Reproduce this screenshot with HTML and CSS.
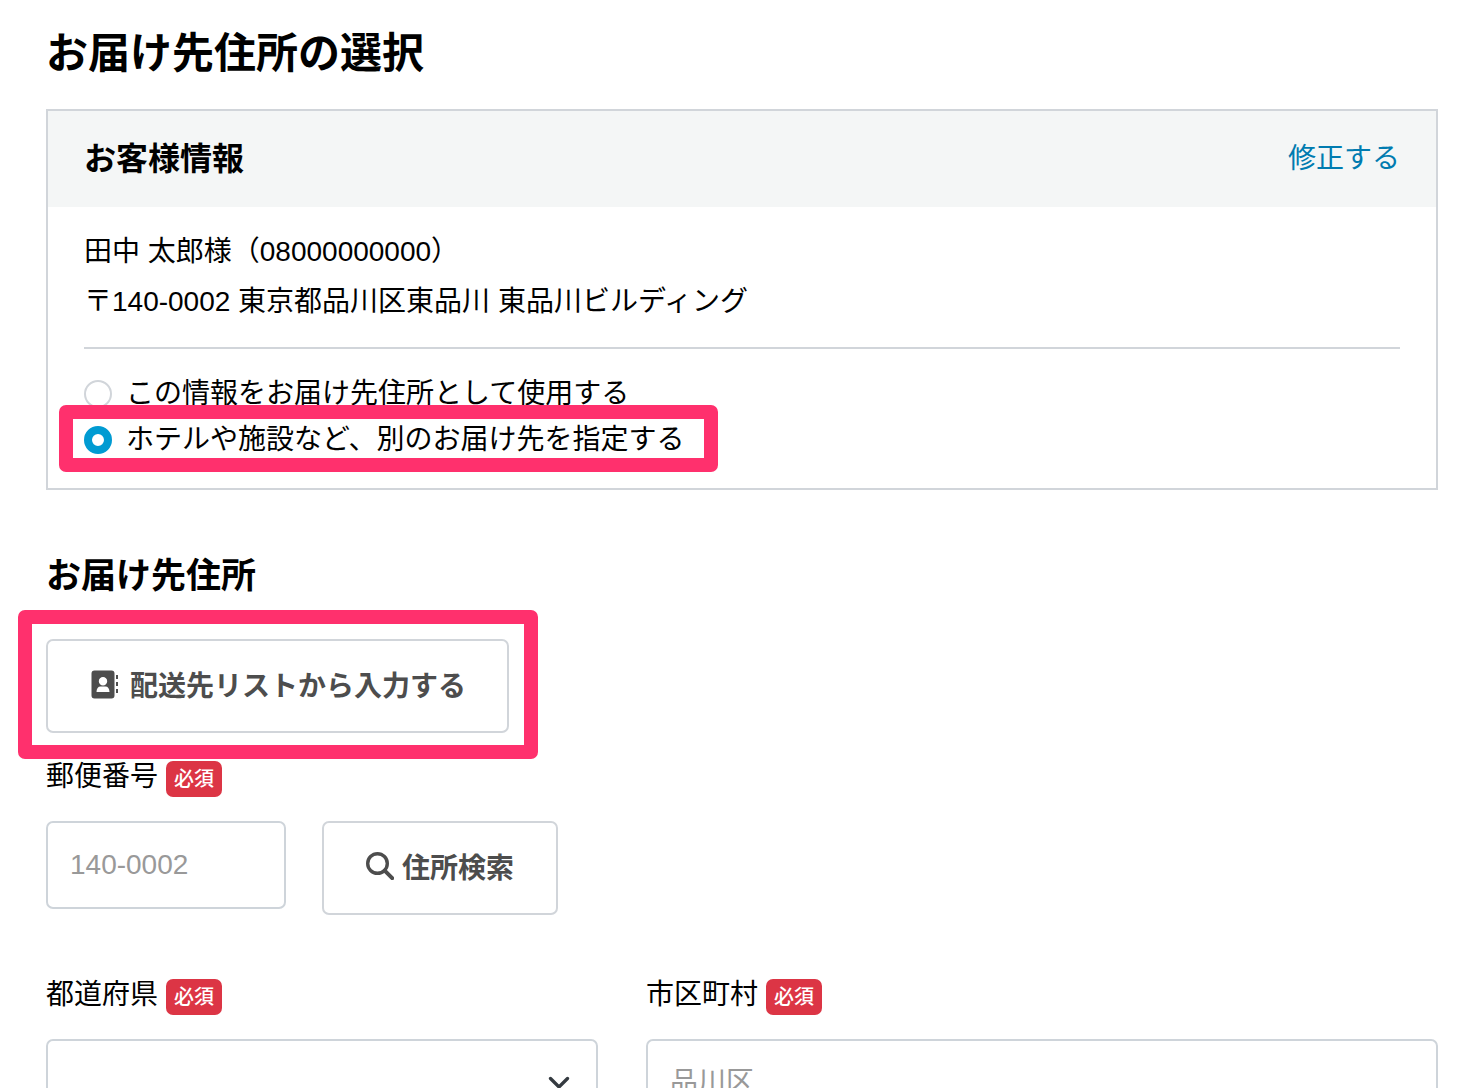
FILE: index.html
```html
<!DOCTYPE html>
<html lang="ja">
<head>
<meta charset="utf-8">
<meta name="viewport" content="width=device-width, initial-scale=1">
<title>お届け先住所の選択</title>
<link rel="stylesheet" href="styles.css">
</head>
<body>
<main class="page">
  <h1 class="page-title">お届け先住所の選択</h1>

  <section class="card">
    <header class="card-header">
      <h2 class="card-title">お客様情報</h2>
      <a class="card-link" href="#">修正する</a>
    </header>
    <div class="card-body">
      <p class="customer-line">田中 太郎様（08000000000）</p>
      <p class="customer-line">〒140-0002 東京都品川区東品川 東品川ビルディング</p>
      <hr class="divider">
      <div class="options">
        <label class="option"><input class="radio" type="radio" name="destination" value="self">この情報をお届け先住所として使用する</label>
        <label class="option highlight highlight-option"><input class="radio" type="radio" name="destination" value="other" checked>ホテルや施設など、別のお届け先を指定する</label>
      </div>
    </div>
  </section>

  <form class="address-form">
    <h2 class="section-title">お届け先住所</h2>
    <div class="highlight highlight-button">
      <button class="button" type="button">
        <svg class="icon-book" viewBox="0 0 32 32" aria-hidden="true">
          <path fill="currentColor" fill-rule="evenodd" d="M4.500 2.500h17a3 3 0 0 1 3 3v22a3 3 0 0 1-3 3H4.500a3 3 0 0 1-3-3V5.500a3 3 0 0 1 3-3zM13 9a4.200 4.200 0 1 0 0 8.400a4.200 4.200 0 1 0 0-8.400zM6.500 24h13c0-3.500-1.700-5.500-4-5.500h-5c-2.300 0-4 2-4 5.500z"/>
          <path fill="currentColor" d="M26 7h2v4h-2zM26 14h2v4h-2zM26 21h2v4h-2z"/>
        </svg>
        配送先リストから入力する
      </button>
    </div>

    <div class="label-row"><label for="postal">郵便番号</label><span class="badge">必須</span></div>
    <div class="postal-row">
      <input class="control postal-input" id="postal" type="text" placeholder="140-0002">
      <button class="button" type="button">
        <svg class="icon-search" viewBox="0 0 28 28" aria-hidden="true">
          <circle cx="11.500" cy="11.500" r="9.800" fill="none" stroke="currentColor" stroke-width="3.400"/>
          <path d="M18.700 18.700l7.500 7.500" fill="none" stroke="currentColor" stroke-width="4" stroke-linecap="round"/>
        </svg>
        住所検索
      </button>
    </div>

    <div class="region-row">
      <div>
        <div class="label-row"><label for="prefecture">都道府県</label><span class="badge">必須</span></div>
        <div class="select-wrap">
          <select class="control" id="prefecture"><option value=""></option></select>
          <svg class="chevron" viewBox="0 0 24 24" aria-hidden="true"><path d="M3.500 7.500l8.500 8.500l8.500-8.500" fill="none" stroke="#343a40" stroke-width="3.300" stroke-linecap="round" stroke-linejoin="round"/></svg>
        </div>
      </div>
      <div>
        <div class="label-row"><label for="city">市区町村</label><span class="badge">必須</span></div>
        <input class="control" id="city" type="text" placeholder="品川区">
      </div>
    </div>
  </form>
</main>
</body>
</html>
```
FILE: styles.css
```css
* {
  box-sizing: border-box;
}

body,
h1,
h2,
p {
  margin: 0;
}

body,
input,
select,
button {
  font-family: "Liberation Sans", "Noto Sans CJK JP", sans-serif;
  font-size: 28px;
}

body {
  color: #000;
  background: #fff;
}

.page {
  height: 100vh;
  overflow: hidden;
  padding: 22px 38px 0 46px;
}

.page-title {
  font-size: 42px;
  line-height: 64px;
}

/* Customer information */
.card {
  margin-top: 23px;
  border: 2px solid #d1d5da;
}

.card-header {
  display: flex;
  align-items: center;
  justify-content: space-between;
  height: 96px;
  padding: 0 36px;
  background: #f4f6f6;
}

.card-title {
  font-size: 32px;
  line-height: 48px;
}

.card-link {
  color: #007bb0;
  line-height: 50px;
  text-decoration: none;
}

.card-body {
  padding: 20px 36px 25px;
}

.customer-line {
  line-height: 50px;
}

.divider {
  height: 2px;
  margin: 20px 0 22px;
  border: 0;
  background: #d1d5da;
}

.options {
  display: flex;
  flex-direction: column;
  align-items: flex-start;
}

.option {
  display: flex;
  align-items: center;
  gap: 14px;
  line-height: 46px;
}

.radio {
  appearance: none;
  width: 28px;
  height: 28px;
  margin: 0;
  border: 2px solid #d1d5da;
  border-radius: 50%;
  background: #fff;
}

.radio:checked {
  border: 8px solid #009bd2;
}

/* Frames drawn over the page to call out a control */
.highlight {
  position: relative;
}

.highlight::after {
  content: "";
  position: absolute;
  border: 14px solid #ff306d;
  border-radius: 7px;
  pointer-events: none;
}

.highlight-option::after {
  inset: -12px -33px -9px -25px;
}

.highlight-button::after {
  inset: -29px -29px -26px -28px;
}

/* Address form */
.section-title {
  margin: 61px 0 38px;
  font-size: 35px;
  line-height: 50px;
}

.highlight-button {
  width: fit-content;
}

.button {
  display: flex;
  align-items: center;
  gap: 8px;
  height: 94px;
  padding: 0 42px 4px;
  border: 2px solid #d1d5da;
  border-radius: 7px;
  background: #fff;
  color: #4d4d4d;
  font-weight: bold;
}

.highlight-button .button {
  padding-right: 41px;
}

.icon-book {
  width: 32px;
  height: 32px;
}

.icon-search {
  width: 28px;
  height: 28px;
}

.label-row {
  display: flex;
  align-items: flex-start;
  gap: 8px;
  height: 36px;
  margin: 28px 0 24px;
  line-height: 32px;
}

.badge {
  padding: 0 8px;
  border-radius: 7px;
  background: #dc3545;
  color: #fff;
  font-size: 20px;
  font-weight: 500;
  line-height: 36px;
}

.postal-row {
  display: flex;
  align-items: flex-start;
  gap: 36px;
}

.control {
  display: block;
  width: 100%;
  height: 88px;
  padding: 0 22px;
  border: 2px solid #ced4da;
  border-radius: 7px;
  background: #fff;
}

.control::placeholder {
  color: #999;
}

.postal-input {
  width: 240px;
}

.region-row {
  display: grid;
  grid-template-columns: 23fr 33fr;
  gap: 48px;
  margin-top: 64px;
}

.region-row .label-row {
  margin-top: 0;
}

.select-wrap {
  position: relative;
}

.select-wrap .control {
  appearance: none;
}

.chevron {
  position: absolute;
  top: 32px;
  right: 27px;
  width: 24px;
  height: 24px;
  pointer-events: none;
}
```
